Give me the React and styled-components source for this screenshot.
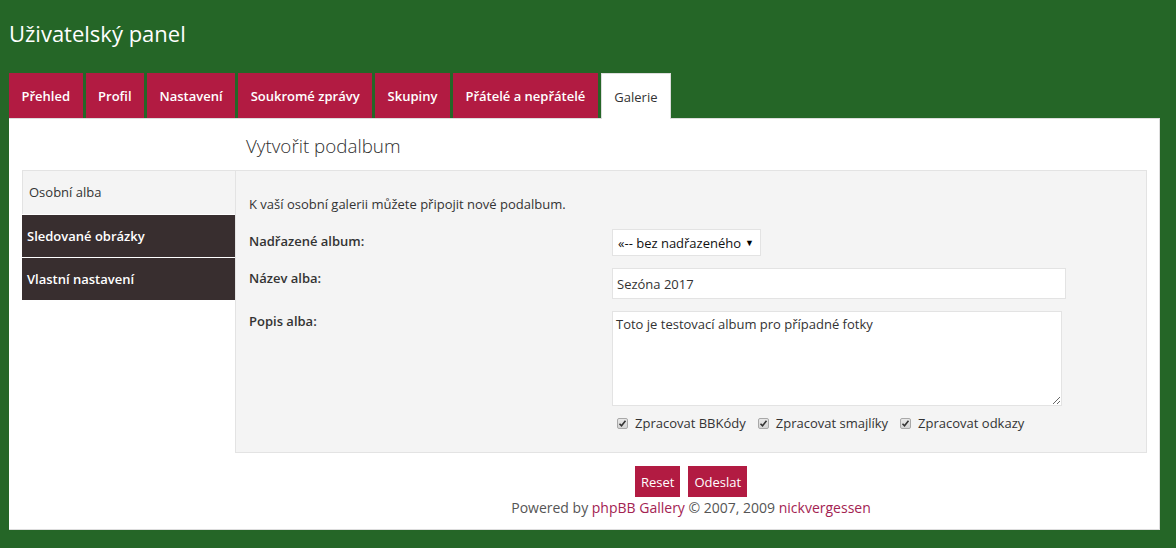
import React from "react";
import styled, { createGlobalStyle } from "styled-components";

const Global = createGlobalStyle`
  html, body { margin: 0; padding: 0; }
  body {
    background: #256627;
    font-family: "Open Sans", "Noto Sans", sans-serif;
    font-size: 13px;
    color: #333;
  }
  * { box-sizing: border-box; }
`;

const Page = styled.div`
  padding: 0 16px 19px 9px;
`;

const Title = styled.h1`
  margin: 0;
  height: 73px;
  padding-top: 17px;
  font-size: 22px;
  font-weight: 400;
  color: #fff;
  line-height: 32px;
`;

const Tabs = styled.ul`
  display: flex;
  list-style: none;
  margin: 0;
  padding: 0;
  gap: 3px;
`;

const Tab = styled.li`
  padding: 0 12.5px;
  display: flex;
  align-items: center;
  font-size: 13px;
  font-weight: ${(p) => (p.$active ? 400 : 600)};
  color: ${(p) => (p.$active ? "#333" : "#fff")};
  background: ${(p) => (p.$active ? "#fff" : "#b21b42")};
  border: ${(p) => (p.$active ? "1px solid #ddd" : "none")};
  border-bottom: none;
  margin-bottom: ${(p) => (p.$active ? "-1px" : "0")};
  position: relative;
  z-index: 1;
  height: ${(p) => (p.$active ? "46px" : "45px")};
`;

const Panel = styled.div`
  background: #fff;
  border: 1px solid #ddd;
  border-left: none;
  padding: 0 12px 12px 13px;
  display: grid;
  grid-template-columns: 213px 1fr;
  grid-template-areas:
    ". head"
    "menu form"
    ". foot";
`;

const Heading = styled.h2`
  grid-area: head;
  margin: 0;
  padding: 15px 0 0 11px;
  height: 51px;
  font-size: 18.8px;
  font-weight: 300;
  color: #2f2f2f;
  line-height: 25px;
`;

const Menu = styled.ul`
  grid-area: menu;
  list-style: none;
  margin: 0;
  padding: 0;
  display: flex;
  flex-direction: column;
  gap: 1px;
`;

const MenuItem = styled.li`
  height: ${(p) => (p.$active ? "44px" : "42px")};
  display: flex;
  align-items: center;
  padding-left: ${(p) => (p.$active ? "6px" : "5px")};
  font-size: 13px;
  font-weight: ${(p) => (p.$active ? 400 : 600)};
  color: ${(p) => (p.$active ? "#333" : "#fff")};
  background: ${(p) => (p.$active ? "#f4f4f4" : "#382e2f")};
  border-top: ${(p) => (p.$active ? "1px solid #e3e3e3" : "none")};
  border-left: ${(p) => (p.$active ? "1px solid #e3e3e3" : "none")};
  padding-bottom: ${(p) => (p.$active ? "2px" : "0")};
`;

const FormBox = styled.div`
  grid-area: form;
  background: #f4f4f4;
  border: 1px solid #e3e3e3;
  padding: 24px 14px 20px 13px;
`;

const Intro = styled.p`
  margin: 0 0 16px;
  line-height: 18px;
  color: #333;
`;

const Row = styled.div`
  display: grid;
  grid-template-columns: 363px 1fr;
  margin-bottom: ${(p) => p.$mb || "12px"};
`;

const Label = styled.label`
  font-weight: 600;
  line-height: 18px;
  padding-top: ${(p) => p.$pt || "1px"};
  color: #333;
`;

const SelectBox = styled.div`
  width: 149px;
  height: 27px;
  background: #fff;
  border: 1px solid #e3e3e3;
  display: flex;
  align-items: center;
  justify-content: space-between;
  padding: 0 6px 0 5px;
  font-size: 13px;
  color: #111;
`;

const Arrow = styled.span`
  font-size: 9px;
  color: #000;
`;

const TextInput = styled.input`
  width: 454px;
  height: 31px;
  background: #fff;
  border: 1px solid #e3e3e3;
  padding: 0 4px;
  font-family: "Open Sans", "Noto Sans", sans-serif;
  font-size: 13px;
  color: #333;
  outline: none;
`;

const TextArea = styled.textarea`
  width: 450px;
  height: 95px;
  background: #fff;
  border: 1px solid #e3e3e3;
  padding: 3px 3px;
  font-family: "Open Sans", "Noto Sans", sans-serif;
  font-size: 13px;
  line-height: 18px;
  color: #333;
  outline: none;
  display: block;
`;

const Checks = styled.div`
  display: flex;
  align-items: center;
  gap: 12px;
  padding-left: 5px;
`;

const CheckLabel = styled.span`
  display: flex;
  align-items: center;
  gap: 7px;
  line-height: 18px;
  color: #333;
`;

const Box = styled.span`
  width: 11px;
  height: 11px;
  border: 1px solid #a8a8a8;
  border-radius: 2px;
  background: linear-gradient(#e8e8e8, #d4d4d4);
  display: inline-flex;
  align-items: center;
  justify-content: center;
`;

const Footer = styled.div`
  grid-area: foot;
  display: flex;
  flex-direction: column;
  align-items: center;
  padding-top: 13px;
`;

const Buttons = styled.div`
  display: flex;
  gap: 8px;
`;

const Button = styled.button`
  height: 31px;
  padding: 0 6px;
  background: #b21b42;
  color: #fff;
  border: none;
  font-family: "Open Sans", "Noto Sans", sans-serif;
  font-size: 13px;
`;

const Copy = styled.div`
  font-size: 14px;
  color: #555;
  line-height: 19px;
  padding-top: 1px;
`;

const Link = styled.span`
  color: #a32352;
`;

const Check = () => (
  <Box>
    <svg width="9" height="9" viewBox="0 0 9 9">
      <path d="M1.5 4.8 L3.5 6.8 L7.5 1.8" stroke="#333" strokeWidth="1.6" fill="none" />
    </svg>
  </Box>
);

export default function App() {
  const tabs = ["Přehled", "Profil", "Nastavení", "Soukromé zprávy", "Skupiny", "Přátelé a nepřátelé", "Galerie"];
  return (
    <Page>
      <Global />
      <Title>Uživatelský panel</Title>
      <Tabs>
        {tabs.map((t) => (
          <Tab key={t} $active={t === "Galerie"}>{t}</Tab>
        ))}
      </Tabs>
      <Panel>
        <Heading>Vytvořit podalbum</Heading>
        <Menu>
          <MenuItem $active>Osobní alba</MenuItem>
          <MenuItem>Sledované obrázky</MenuItem>
          <MenuItem>Vlastní nastavení</MenuItem>
        </Menu>
        <FormBox>
          <Intro>K vaší osobní galerii můžete připojit nové podalbum.</Intro>
          <Row>
            <Label $pt="3px">Nadřazené album:</Label>
            <SelectBox>
              <span>«-- bez nadřazeného</span>
              <Arrow>▼</Arrow>
            </SelectBox>
          </Row>
          <Row>
            <Label>Název alba:</Label>
            <div><TextInput defaultValue="Sezóna 2017" /></div>
          </Row>
          <Row $mb="8px">
            <Label>Popis alba:</Label>
            <div><TextArea defaultValue="Toto je testovací album pro případné fotky" /></div>
          </Row>
          <Row $mb="0">
            <span />
            <Checks>
              <CheckLabel><Check />Zpracovat BBKódy</CheckLabel>
              <CheckLabel><Check />Zpracovat smajlíky</CheckLabel>
              <CheckLabel><Check />Zpracovat odkazy</CheckLabel>
            </Checks>
          </Row>
        </FormBox>
        <Footer>
          <Buttons>
            <Button>Reset</Button>
            <Button>Odeslat</Button>
          </Buttons>
          <Copy>Powered by <Link>phpBB Gallery</Link> © 2007, 2009 <Link>nickvergessen</Link></Copy>
        </Footer>
      </Panel>
    </Page>
  );
}
